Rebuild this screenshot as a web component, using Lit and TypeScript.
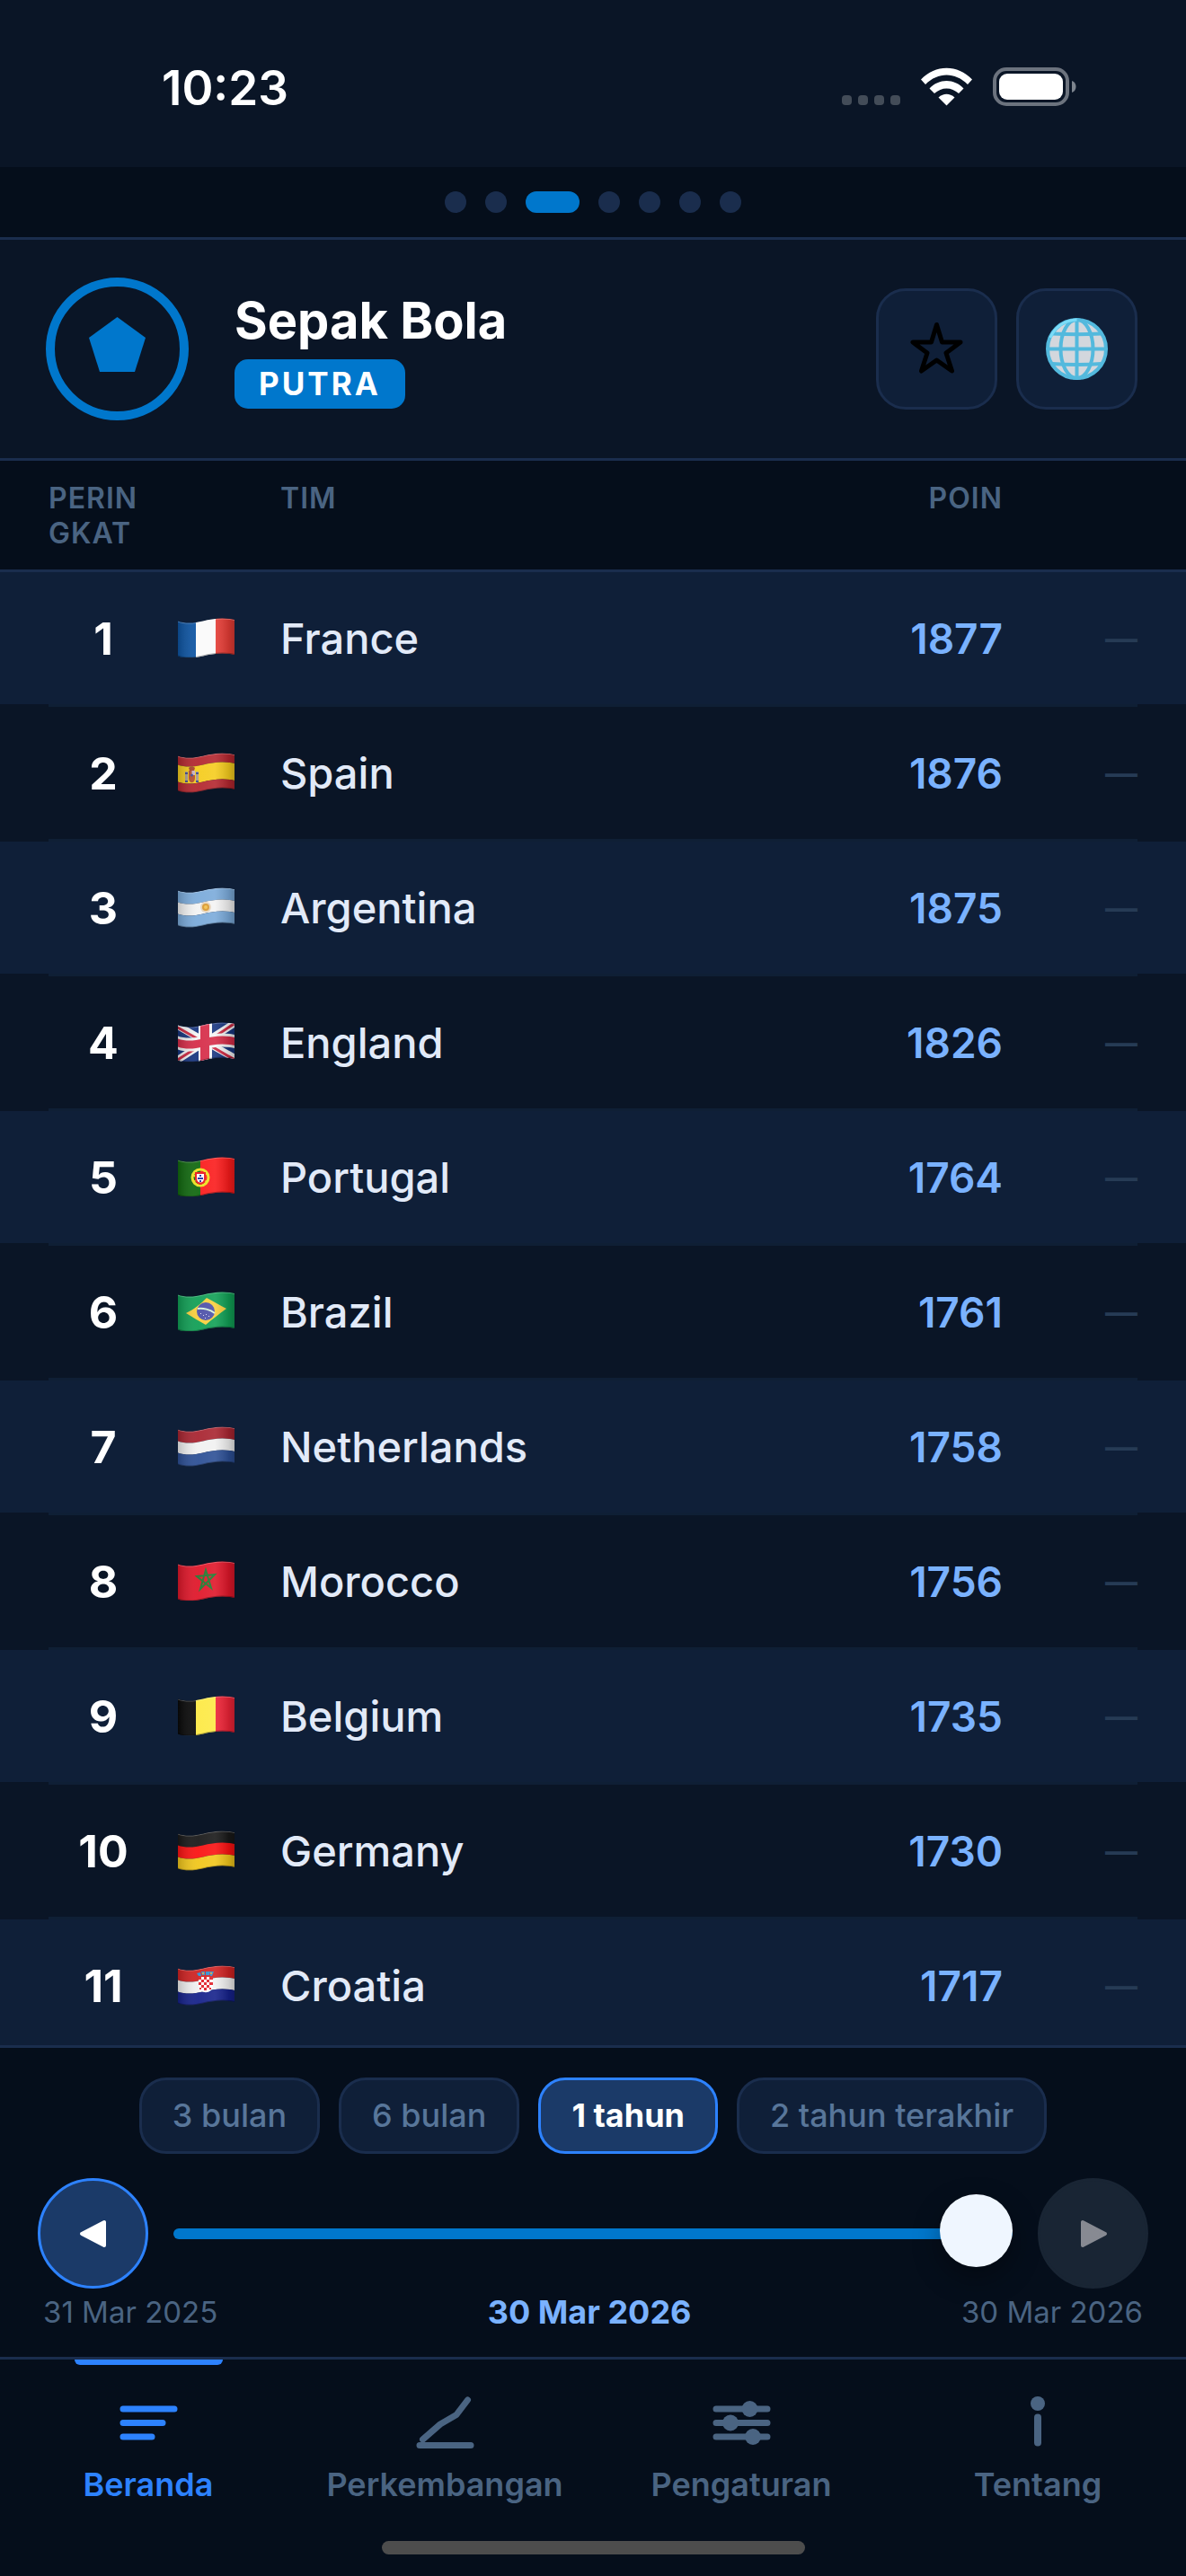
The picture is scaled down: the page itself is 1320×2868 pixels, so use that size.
import { LitElement, html, svg, css, type TemplateResult, type SVGTemplateResult } from 'lit';
import { customElement, property, state } from 'lit/decorators.js';
import { classMap } from 'lit/directives/class-map.js';

interface Team {
  name: string;
  flag: string;
  points: number;
}

const TEAMS: Team[] = [
  { name: 'France', flag: 'fr', points: 1877 },
  { name: 'Spain', flag: 'es', points: 1876 },
  { name: 'Argentina', flag: 'ar', points: 1875 },
  { name: 'England', flag: 'gb', points: 1826 },
  { name: 'Portugal', flag: 'pt', points: 1764 },
  { name: 'Brazil', flag: 'br', points: 1761 },
  { name: 'Netherlands', flag: 'nl', points: 1758 },
  { name: 'Morocco', flag: 'ma', points: 1756 },
  { name: 'Belgium', flag: 'be', points: 1735 },
  { name: 'Germany', flag: 'de', points: 1730 },
  { name: 'Croatia', flag: 'hr', points: 1717 },
];

const RANGES = ['3 bulan', '6 bulan', '1 tahun', '2 tahun terakhir'];

// A horizontal stripe between two heights, bent along the flag's wave.
const band = (top: number, bottom: number) =>
  `M0 ${top + 3.5}C8 ${top + 6.5} 18 ${top + 6} 28 ${top + 3.5}S50 ${top - 1} 63 ${top + 2}` +
  `V${bottom + 2}C50 ${bottom - 1} 38 ${bottom + 1} 28 ${bottom + 3.5}` +
  `S8 ${bottom + 6.5} 0 ${bottom + 3.5}Z`;

const stripes = (a: string, b: string, c: string) => svg`
  <path d=${band(0, 13)} fill=${a}></path>
  <path d=${band(13, 26)} fill=${b}></path>
  <path d=${band(26, 39)} fill=${c}></path>
`;

const columns = (a: string, b: string, c: string) => svg`
  <path d="M0 0H21V44H0Z" fill=${a}></path>
  <path d="M20 0H42V44H20Z" fill=${b}></path>
  <path d="M42 0H63V44H42Z" fill=${c}></path>
`;

const FLAGS: Record<string, SVGTemplateResult> = {
  fr: columns('#0d55a4', '#fafafa', '#e63c35'),
  es: svg`
    <path d=${band(0, 10)} fill="#b3262e"></path>
    <path d=${band(10, 29)} fill="#f5cc1d"></path>
    <path d=${band(29, 39)} fill="#b3262e"></path>
    <path d="M8 21h3v12H8zM20 21h3v12h-3z" fill="#a79a94"></path>
    <path d="M8 22h3v2H8zM20 22h3v2h-3zM8 31h3v2H8zM20 31h3v2h-3z" fill="#3c4a8c"></path>
    <path d="M12 20h7v8c0 7-7 7-7 0z" fill="#b8502c"></path>
    <path d="M15.5 20h3.5v5h-3.500z" fill="#c9b4c4"></path>
    <path d="M12 17c2-2 5-2 7 0l-1 3h-5z" fill="#a8432b"></path>
    <circle cx="15.5" cy="25" r="1.5" fill="#3e4b9b"></circle>
  `,
  ar: svg`
    ${stripes('#7aaada', '#f3f3f3', '#7aaada')}
    <circle cx="31" cy="22" r="6" fill="#e6d3ba"></circle>
    <circle cx="31" cy="22" r="4" fill="#d9982f"></circle>
    <circle cx="31" cy="22" r="2" fill="#f3c14d"></circle>
  `,
  gb: svg`
    <path d="M0 0H63V44H0Z" fill="#17357f"></path>
    <path d="M-2 3L65 41M-2 43L65 0" stroke="#f4f4f4" stroke-width="8"></path>
    <path d="M-2 5L28 22M34 21L65 0M34 25L65 43M-2 43L28 24" stroke="#cc2841" stroke-width="3"></path>
    <path d="M23 0H38V44H23Z" fill="#f4f4f4"></path>
    <path d=${band(12, 27)} fill="#f4f4f4"></path>
    <path d="M25 0H35V44H25Z" fill="#d62c48"></path>
    <path d=${band(15, 24)} fill="#d62c48"></path>
  `,
  pt: svg`
    <path d="M0 0H26V44H0Z" fill="#11690f"></path>
    <path d="M25 0H63V44H25Z" fill="#fb1b1b"></path>
    <circle cx="25" cy="23" r="9" fill="none" stroke="#ece21f" stroke-width="3"></circle>
    <path d="M16 20L33 28M17 28L33 18" stroke="#ece21f" stroke-width="2"></path>
    <path d="M19 17H31V24C31 33 19 33 19 24Z" fill="#e8151b"></path>
    <path d="M21 19H29V24C29 30 21 30 21 24Z" fill="#fff"></path>
    <path d="M24 20h2v2h-2zM22 23h2v2h-2zM24 23h2v2h-2zM26 23h2v2h-2zM24 26h2v2h-2z" fill="#2431a5"></path>
  `,
  br: svg`
    <path d="M0 0H63V44H0Z" fill="#109f55"></path>
    <path d="M9 24C18 20 26 13 32 7C40 11 46 15 54 19C46 25 39 30 31 37C24 33 17 29 9 24Z" fill="#f8cf3c"></path>
    <circle cx="31" cy="22" r="10" fill="#4c50a8"></circle>
    <path d="M22 19C28 18 36 20 41 24" stroke="#d5f0dc" stroke-width="2" fill="none"></path>
    <path d="M25 24h1v1h-1zM28 26h1v1h-1zM31 25h1v1h-1zM34 27h1v1h-1zM30 29h1v1h-1z" fill="#d8daf5"></path>
  `,
  nl: stripes('#a82430', '#f1f1f1', '#2c4f95'),
  ma: svg`
    <path d="M0 0H63V44H0Z" fill="#e01629"></path>
    <path d="M31 10L37 30L21 17L41 15L25 31Z" fill="none" stroke="#1c7a2e" stroke-width="2"></path>
  `,
  be: columns('#090909', '#fde944', '#ee2336'),
  de: stripes('#181818', '#fb1111', '#f1c61a'),
  hr: svg`
    ${stripes('#cf2222', '#f1f1f1', '#15218a')}
    <path d="M23 13H39V22C39 33 23 33 23 22Z" fill="#fff"></path>
    <path
      d="M23 13h3v3h-3zM29 13h3v3h-3zM35 13h4v3h-4zM26 16h3v3h-3zM32 16h3v3h-3zM23 19h3v3h-3zM29 19h3v3h-3zM35 19h4v3h-4zM26 22h3v3h-3zM32 22h3v3h-3zM24 25h2v2h-2zM29 25h3v3h-3zM35 25h2v2h-2z"
      fill="#e0202a"
    ></path>
    <path d="M21 9l4-1 1 4h-3zM26 7h4v4h-3zM31 7h4v4h-4zM35 7l5 0-2 5h-2z" fill="#2c8fd0"></path>
    <path d="M27 8h2v2h-2zM36 8h2v2h-2z" fill="#c9a24a"></path>
  `,
};

@customElement('wave-flag')
export class WaveFlag extends LitElement {
  @property() code = '';

  static styles = css`
    :host {
      display: block;
      width: 63px;
      height: 45px;
    }
    svg {
      display: block;
    }
  `;

  render() {
    return html`
      <svg width="63" height="45" viewBox="0 0 63 45" aria-hidden="true">
        <defs>
          <clipPath id="cloth"><path d=${band(0, 39)}></path></clipPath>
          <linearGradient id="fold">
            <stop offset="0" stop-color="#000" stop-opacity="0.2"></stop>
            <stop offset="0.35" stop-color="#fff" stop-opacity="0.06"></stop>
            <stop offset="0.65" stop-color="#fff" stop-opacity="0.1"></stop>
            <stop offset="0.9" stop-color="#000" stop-opacity="0.14"></stop>
            <stop offset="1" stop-color="#000" stop-opacity="0.25"></stop>
          </linearGradient>
        </defs>
        <g clip-path="url(#cloth)">
          ${FLAGS[this.code]}
          <path d="M0 0H63V45H0Z" fill="url(#fold)"></path>
          <path d=${band(0, 1)} fill="#fff" opacity="0.25"></path>
          <path d=${band(38, 39)} fill="#000" opacity="0.3"></path>
        </g>
      </svg>
    `;
  }
}

interface Tab {
  label: string;
  icon: SVGTemplateResult;
}

const TABS: Tab[] = [
  {
    label: 'Beranda',
    icon: svg`<path d="M5 18H62M5 33.5H49M5 49H37"></path>`,
  },
  {
    label: 'Perkembangan',
    icon: svg`<path d="M8.5 52L28 35L46 24.5L58.5 8M5 58.5H62"></path>`,
  },
  {
    label: 'Pengaturan',
    icon: svg`
      <path d="M5 18H62M5 33.5H62M5 49H62"></path>
      <g class="solid">
        <circle cx="42.5" cy="18" r="9"></circle>
        <circle cx="21" cy="33.5" r="9"></circle>
        <circle cx="46" cy="49" r="9"></circle>
      </g>
    `,
  },
  {
    label: 'Tentang',
    icon: svg`
      <path class="stem" d="M33 27.5V55.5"></path>
      <circle class="solid" cx="33" cy="12" r="8"></circle>
    `,
  },
];

@customElement('app-root')
export class AppRoot extends LitElement {
  @state() private range = 2;
  @state() private tab = 0;
  @state() private page = 2;
  @state() private position = 100;

  static styles = css`
    :host {
      --bg: #0a1526;
      --bg-deep: #050e1b;
      --card: #0f1f38;
      --line: #1a2d4d;
      --accent: #0077cc;
      --bright: #2d82ff;
      --sky: #7ab2ff;
      --muted: #4a6482;

      display: flex;
      flex-direction: column;
      height: 100vh;
      overflow: hidden;
      background: var(--bg);
      color: #fff;
      font-family: Inter, 'Liberation Sans', sans-serif;
    }
    * {
      box-sizing: border-box;
    }
    button {
      margin: 0;
      padding: 0;
      border: 0;
      background: none;
      color: inherit;
      font: inherit;
      cursor: pointer;
    }
    svg {
      display: block;
    }

    .status {
      display: flex;
      justify-content: space-between;
      align-items: center;
      padding: 67px 120px 57px 180px;
      font-size: 53px;
      line-height: 62px;
      font-weight: 600;
    }
    .pages {
      display: flex;
      justify-content: center;
      gap: 21px;
      padding: 27px;
      background: var(--bg-deep);
      border-bottom: 3px solid var(--line);
    }
    .dot {
      width: 24px;
      height: 24px;
      border-radius: 12px;
      background: var(--line);
    }
    .dot.on {
      width: 60px;
      background: var(--accent);
    }

    header {
      display: flex;
      align-items: center;
      gap: 51px;
      padding: 42px 54px 42px 51px;
      border-bottom: 3px solid var(--line);
    }
    .sport {
      flex: 1;
    }
    h1 {
      margin: 0;
      font-size: 56px;
      line-height: 68px;
      font-weight: 700;
    }
    .badge {
      display: inline-block;
      margin-top: 9px;
      padding: 6px 27px;
      border-radius: 15px;
      background: var(--accent);
      font-size: 35px;
      line-height: 43px;
      font-weight: 700;
      letter-spacing: 3px;
    }
    .actions {
      display: flex;
      gap: 21px;
    }
    .action {
      display: grid;
      place-items: center;
      width: 135px;
      height: 135px;
      border: 3px solid var(--line);
      border-radius: 33px;
      background: var(--card);
    }

    .list {
      flex: 1;
      min-height: 0;
      overflow-y: auto;
      scrollbar-width: none;
    }
    table {
      width: 100%;
      table-layout: fixed;
      border-collapse: separate;
      border-spacing: 0;
    }
    th {
      position: sticky;
      top: 0;
      padding: 22px 0 21px;
      background: var(--bg-deep);
      border-bottom: 3px solid var(--line);
      color: var(--muted);
      font-size: 32px;
      line-height: 39px;
      font-weight: 600;
      letter-spacing: 1px;
      text-align: left;
      vertical-align: top;
      word-break: break-all;
    }
    td {
      height: 150px;
      padding: 0;
      border-bottom: 3px solid #0f1f35;
      vertical-align: middle;
    }
    tbody tr:nth-child(odd) {
      background: var(--card);
    }
    .edge {
      width: 54px;
      border-bottom-color: var(--line);
    }
    td.edge {
      border-bottom-color: var(--bg);
    }
    .rank {
      width: 122px;
    }
    td.rank {
      font-size: 50px;
      line-height: 60px;
      font-weight: 700;
      text-align: center;
    }
    .flag {
      width: 136px;
    }
    td.flag {
      padding-left: 22px;
    }
    td.team {
      color: #e2eaf8;
      font-size: 47px;
      line-height: 56px;
      font-weight: 500;
    }
    .points {
      width: 180px;
      text-align: right;
    }
    td.points {
      color: var(--sky);
      font-size: 46px;
      line-height: 54px;
      font-weight: 600;
    }
    .change {
      width: 150px;
      text-align: right;
    }
    td.change {
      color: #263b55;
      font-size: 36px;
      line-height: 44px;
      font-weight: 600;
    }

    .timeline {
      display: flex;
      flex-direction: column;
      padding: 33px 42px 28px;
      background: var(--bg-deep);
      border-top: 3px solid var(--line);
    }
    .chips {
      display: flex;
      justify-content: center;
      gap: 21px;
    }
    .chip {
      padding: 18px 34px;
      border: 3px solid var(--line);
      border-radius: 30px;
      background: var(--card);
      color: #58769a;
      font-size: 36px;
      line-height: 43px;
      font-weight: 500;
    }
    .chip.on {
      border-color: var(--bright);
      background: #1b3a68;
      color: #fff;
      font-weight: 700;
    }
    .scrub {
      display: flex;
      align-items: center;
      gap: 28px;
      margin-top: 27px;
    }
    .step {
      display: grid;
      place-items: center;
      flex: none;
      width: 123px;
      height: 123px;
      border: 3px solid var(--bright);
      border-radius: 50%;
      background: #1b3a68;
      color: #fff;
    }
    .step:disabled {
      border-color: #192534;
      background: #192534;
      color: #878a92;
    }
    input {
      flex: 1;
      min-width: 0;
      height: 81px;
      margin: 0;
      appearance: none;
      background: none;
    }
    input::-webkit-slider-runnable-track {
      height: 12px;
      border-radius: 6px;
      background: var(--accent);
    }
    input::-webkit-slider-thumb {
      appearance: none;
      width: 81px;
      height: 81px;
      margin-top: -38px;
      border-radius: 50%;
      background: #eff6ff;
      box-shadow: 0 12px 30px rgba(0, 0, 0, 0.35);
    }
    .dates {
      display: flex;
      justify-content: space-between;
      align-items: center;
      padding: 4px 6px 0;
      color: var(--muted);
      font-size: 33px;
      line-height: 44px;
    }
    .dates strong {
      color: var(--sky);
      font-size: 36px;
      font-weight: 700;
    }

    nav {
      padding-bottom: 24px;
      background: var(--bg-deep);
      border-top: 3px solid var(--line);
    }
    .tabs {
      display: grid;
      grid-template-columns: repeat(4, 1fr);
    }
    .tab {
      display: flex;
      flex-direction: column;
      align-items: center;
      color: var(--muted);
      font-size: 36px;
      line-height: 44px;
      font-weight: 600;
    }
    .tab::before {
      content: '';
      width: 50%;
      height: 6px;
      margin-bottom: 31px;
      border-radius: 0 0 6px 6px;
    }
    .tab.on {
      color: var(--bright);
    }
    .tab.on::before {
      background: var(--bright);
    }
    .tab svg {
      margin-bottom: 14px;
      fill: none;
      stroke: currentColor;
      stroke-width: 7;
      stroke-linecap: round;
      stroke-linejoin: round;
    }
    .tab .solid {
      fill: currentColor;
      stroke: none;
    }
    .tab .stem {
      stroke-width: 8;
    }
    .home {
      width: 471px;
      height: 15px;
      margin: 41px auto 0;
      border-radius: 8px;
      background: #4d4d4d;
    }
  `;

  private onSlide(e: Event) {
    this.position = Number((e.target as HTMLInputElement).value);
  }

  private step(by: number) {
    this.position = Math.max(0, Math.min(100, this.position + by));
  }

  private renderStatus(): TemplateResult {
    return html`
      <div class="status">
        <span>10:23</span>
        <svg width="264" height="46" viewBox="0 1 264 46" aria-hidden="true">
          <g fill="#434c58">
            <rect x="1" y="32" width="11" height="11" rx="4"></rect>
            <rect x="19" y="32" width="11" height="11" rx="4"></rect>
            <rect x="37" y="32" width="11" height="11" rx="4"></rect>
            <rect x="55" y="32" width="11" height="11" rx="4"></rect>
          </g>
          <g fill="#fff">
            <path d="M89 14.5C105-2.5 130-2.5 146 14.5L141 20C127 6 108 6 94 20Z"></path>
            <path d="M98.5 24.5C109 13 126 13 136.5 24.5L131 30C123 22.5 112 22.5 104 30Z"></path>
            <path d="M108.5 34.5C114 29.5 121 29.5 126.5 34.5L117.5 43.5Z"></path>
            <rect x="176" y="8" width="71" height="29" rx="9"></rect>
          </g>
          <rect x="171" y="3" width="81" height="39" rx="13" fill="none" stroke="#6c737e" stroke-width="4"></rect>
          <path d="M257 16C263 18 263 27 257 29Z" fill="#7d848e"></path>
        </svg>
      </div>
    `;
  }

  private renderHeader(): TemplateResult {
    return html`
      <header>
        <svg width="159" height="159" viewBox="0 0 159 159" aria-hidden="true">
          <circle cx="79.5" cy="79.5" r="74.5" fill="none" stroke="#0077cc" stroke-width="10"></circle>
          <path d="M79.5 44L111 67L99 105H60L48 67Z" fill="#0077cc"></path>
        </svg>
        <div class="sport">
          <h1>Sepak Bola</h1>
          <span class="badge">PUTRA</span>
        </div>
        <div class="actions">
          <button class="action" aria-label="Favorit">
            <svg width="69" height="69" viewBox="0 0 69 69" fill="none" stroke="#000" stroke-width="5" stroke-linejoin="round">
              <path d="M34.5 7.5L40.5 27H61L45 39L51.5 59L34.5 47L17.5 59L24 39L8 27H28.5Z"></path>
            </svg>
          </button>
          <button class="action" aria-label="Bahasa">
            <svg width="69" height="69" viewBox="0 0 69 69" fill="none" stroke="#53b9dd" stroke-width="4">
              <circle cx="34.5" cy="34.5" r="32.5" fill="#d3d7dd"></circle>
              <path d="M34.5 2V67M2 34.5H67M7 17.5Q34.5 19 62 17.5M7 51Q34.5 53 62 51"></path>
              <ellipse cx="34.5" cy="34.5" rx="18" ry="32.5"></ellipse>
              <path d="M5 22A32.5 32.5 0 0 1 34.5 2" stroke="#7bdcf8" stroke-width="3"></path>
            </svg>
          </button>
        </div>
      </header>
    `;
  }

  private renderTable(): TemplateResult {
    return html`
      <div class="list">
        <table>
          <thead>
            <tr>
              <th class="edge"></th>
              <th class="rank">PERINGKAT</th>
              <th class="flag"></th>
              <th class="team">TIM</th>
              <th class="points">POIN</th>
              <th class="change"></th>
              <th class="edge"></th>
            </tr>
          </thead>
          <tbody>
            ${TEAMS.map(
              (team, i) => html`
                <tr>
                  <td class="edge"></td>
                  <td class="rank">${i + 1}</td>
                  <td class="flag"><wave-flag code=${team.flag}></wave-flag></td>
                  <td class="team">${team.name}</td>
                  <td class="points">${team.points}</td>
                  <td class="change">—</td>
                  <td class="edge"></td>
                </tr>
              `
            )}
          </tbody>
        </table>
      </div>
    `;
  }

  private renderTimeline(): TemplateResult {
    return html`
      <section class="timeline">
        <div class="chips">
          ${RANGES.map(
            (label, i) => html`
              <button
                class="chip ${classMap({ on: i === this.range })}"
                aria-pressed=${i === this.range}
                @click=${() => (this.range = i)}
              >${label}</button>
            `
          )}
        </div>
        <div class="scrub">
          <button class="step" aria-label="Mundur" @click=${() => this.step(-1)}>
            <svg width="36" height="36" viewBox="0 0 36 36" fill="currentColor" stroke="currentColor" stroke-width="4" stroke-linejoin="round">
              <path d="M5 18L30 5V31Z"></path>
            </svg>
          </button>
          <input
            type="range"
            min="0"
            max="100"
            aria-label="Tanggal"
            .value=${String(this.position)}
            @input=${this.onSlide}
          />
          <button
            class="step"
            aria-label="Maju"
            ?disabled=${this.position === 100}
            @click=${() => this.step(1)}
          >
            <svg width="36" height="36" viewBox="0 0 36 36" fill="currentColor" stroke="currentColor" stroke-width="4" stroke-linejoin="round">
              <path d="M31 18L6 5V31Z"></path>
            </svg>
          </button>
        </div>
        <div class="dates">
          <span>31 Mar 2025</span>
          <strong>30 Mar 2026</strong>
          <span>30 Mar 2026</span>
        </div>
      </section>
    `;
  }

  render() {
    return html`
      ${this.renderStatus()}
      <div class="pages">
        ${[0, 1, 2, 3, 4, 5, 6].map(
          (i) => html`
            <button
              class="dot ${classMap({ on: i === this.page })}"
              aria-label="Halaman ${i + 1}"
              @click=${() => (this.page = i)}
            ></button>
          `
        )}
      </div>
      ${this.renderHeader()} ${this.renderTable()} ${this.renderTimeline()}
      <nav>
        <div class="tabs">
          ${TABS.map(
            (tab, i) => html`
              <button class="tab ${classMap({ on: i === this.tab })}" @click=${() => (this.tab = i)}>
                <svg width="66" height="66" viewBox="0 0 66 66" aria-hidden="true">${tab.icon}</svg>
                ${tab.label}
              </button>
            `
          )}
        </div>
        <div class="home"></div>
      </nav>
    `;
  }
}

declare global {
  interface HTMLElementTagNameMap {
    'app-root': AppRoot;
    'wave-flag': WaveFlag;
  }
}
